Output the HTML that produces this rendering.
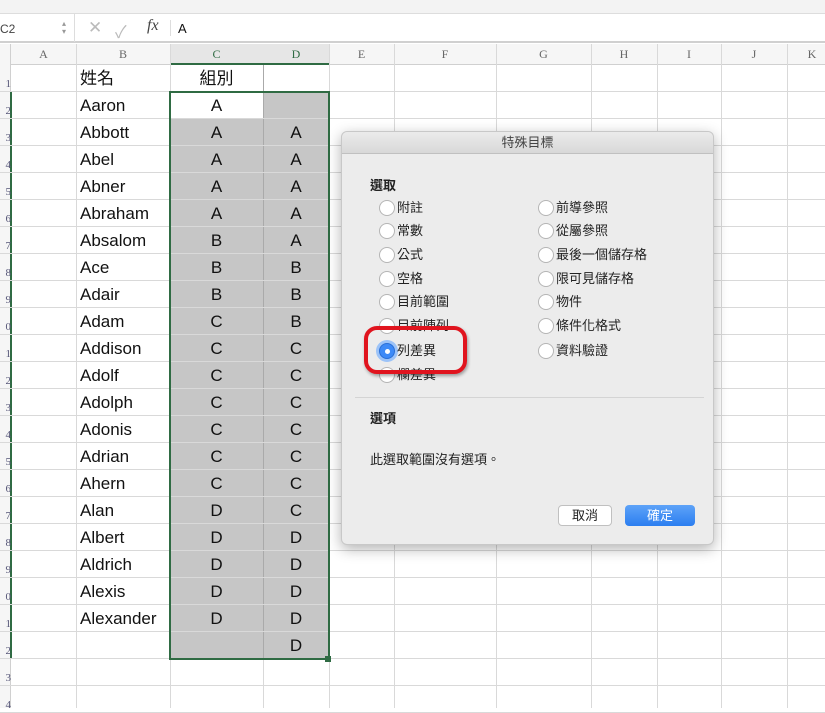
<!DOCTYPE html>
<html><head><meta charset="utf-8"><style>
*{margin:0;padding:0;box-sizing:border-box}
body{width:825px;height:708px;overflow:hidden;background:#fff;font-family:"Liberation Sans","Noto Sans CJK TC",sans-serif;position:relative}
.a{position:absolute}
.hl{position:absolute;left:0;width:825px;height:1px;background:#d9d9d9}
.vl{position:absolute;top:44px;height:664px;width:1px;background:#d9d9d9}
.ch{position:absolute;top:44px;height:21px;text-align:center;font-family:"Liberation Serif",serif;font-size:12px;color:#666;line-height:21px}
.c{position:absolute;height:27px;line-height:27px;font-size:17px;color:#111}
.g{background:#c6c6c6}
.rn{position:absolute;left:0;width:11px;font-size:11px;color:#557;font-family:"Liberation Serif",serif;overflow:hidden;text-align:right}
.r{position:absolute;width:16px;height:16px;border-radius:50%;border:1px solid #b5b5b5;background:#fff}
.t{position:absolute;font-size:13px;color:#222;line-height:16px}
</style></head><body>
<div class="a" style="left:0;top:0;width:825px;height:14px;background:#f3f3f3;border-bottom:1px solid #ddd"></div>
<div class="a" style="left:0;top:14px;width:825px;height:29px;background:#fff;border-bottom:2px solid #d0d0d0"></div>
<div class="a" style="left:0;top:14px;width:75px;height:28px;border-right:1px solid #ddd;font-size:12px;line-height:30px;color:#444">C2</div>
<div class="a" style="left:62px;top:20px;font-size:8px;color:#999;line-height:8px">▴<br>▾</div>
<div class="a" style="left:88px;top:18px;font-size:17px;color:#bbb">✕</div>
<div class="a" style="left:115px;top:18px;font-size:17px;color:#bbb">✓</div>
<div class="a" style="left:147px;top:17px;font-size:16px;font-style:italic;font-family:'Liberation Serif',serif;color:#444">fx</div>
<div class="a" style="left:170px;top:20px;width:1px;height:16px;background:#ddd"></div>
<div class="a" style="left:178px;top:21px;font-size:13px;color:#111">A</div>
<div class="a" style="left:0;top:44px;width:825px;height:21px;background:#f6f6f6;border-bottom:1px solid #d0d0d0"></div>
<div class="a" style="left:170px;top:44px;width:159px;height:21px;background:#e6e6e6;border-bottom:2px solid #2f6b43"></div>
<div class="a" style="left:0;top:44px;width:11px;height:664px;background:#f6f6f6;border-right:1px solid #d0d0d0"></div>
<div class="a" style="left:10px;top:92px;width:2px;height:567px;background:#2f6b43"></div>
<div class="ch" style="left:11px;width:65px">A</div><div class="ch" style="left:76px;width:94px">B</div><div class="ch" style="left:170px;width:93px;color:#2f6b43">C</div><div class="ch" style="left:263px;width:66px;color:#2f6b43">D</div><div class="ch" style="left:329px;width:65px">E</div><div class="ch" style="left:394px;width:102px">F</div><div class="ch" style="left:496px;width:95px">G</div><div class="ch" style="left:591px;width:66px">H</div><div class="ch" style="left:657px;width:64px">I</div><div class="ch" style="left:721px;width:66px">J</div><div class="ch" style="left:787px;width:50px">K</div>
<div class="a g" style="left:263px;top:92px;width:66px;height:27px"></div>
<div class="a g" style="left:170px;top:119px;width:159px;height:540px"></div>
<div class="vl" style="left:76px"></div><div class="vl" style="left:170px"></div><div class="vl" style="left:263px;background:#aaa;top:65px;height:594px"></div><div class="vl" style="left:263px;top:659px;height:49px"></div><div class="vl" style="left:329px"></div><div class="vl" style="left:394px"></div><div class="vl" style="left:496px"></div><div class="vl" style="left:591px"></div><div class="vl" style="left:657px"></div><div class="vl" style="left:721px"></div><div class="vl" style="left:787px"></div>
<div id="rows"></div>
<script>
var names=["Aaron","Abbott","Abel","Abner","Abraham","Absalom","Ace","Adair","Adam","Addison","Adolf","Adolph","Adonis","Adrian","Ahern","Alan","Albert","Aldrich","Alexis","Alexander"];
var C="AAAAABBBCCCCCCCDDDDD",D="AAAAABBBCCCCCCCDDDDD";
var h='';
for(var i=1;i<=24;i++){var y=65+(i-1)*27;h+='<div class="hl" style="top:'+(y+26)+'px"></div><div class="rn" style="top:'+(y+13)+'px">'+(i%10==0?'0':i%10)+'</div>';}
h+='<div class="c" style="left:80px;top:65px">姓名</div><div class="c" style="left:170px;width:93px;text-align:center;top:65px">組別</div>';
for(var i=0;i<20;i++){var y=92+i*27;h+='<div class="c" style="left:80px;top:'+y+'px">'+names[i]+'</div><div class="c" style="left:170px;width:93px;text-align:center;top:'+y+'px">'+C[i]+'</div><div class="c" style="left:263px;width:66px;text-align:center;top:'+(y+27)+'px">'+D[i]+'</div>';}
document.getElementById('rows').innerHTML=h;
</script>
<div class="a" style="left:169px;top:91px;width:161px;height:569px;border:2px solid #2f6b43"></div>
<div class="a" style="left:325px;top:656px;width:6px;height:6px;background:#2f6b43"></div>
<div class="a" style="left:341px;top:131px;width:373px;height:414px;background:#ececec;border:1px solid #c8c8c8;border-radius:6px;box-shadow:0 4px 14px rgba(0,0,0,.3)">
<div class="a" style="left:0;top:0;width:371px;height:22px;background:linear-gradient(#ebebeb,#d8d8d8);border-bottom:1px solid #c0c0c0;border-radius:6px 6px 0 0;text-align:center;font-size:13px;line-height:22px;color:#444">特殊目標</div>
<div class="t" style="left:28px;top:46px;font-weight:bold">選取</div>
<div class="r" style="left:37px;top:68px"></div><div class="t" style="left:55px;top:68px">附註</div>
<div class="r" style="left:37px;top:91px"></div><div class="t" style="left:55px;top:91px">常數</div>
<div class="r" style="left:37px;top:115px"></div><div class="t" style="left:55px;top:115px">公式</div>
<div class="r" style="left:37px;top:139px"></div><div class="t" style="left:55px;top:139px">空格</div>
<div class="r" style="left:37px;top:162px"></div><div class="t" style="left:55px;top:162px">目前範圍</div>
<div class="r" style="left:37px;top:186px"></div><div class="t" style="left:55px;top:186px">目前陣列</div>
<div class="r" style="left:37px;top:211px;background:#3d8af7;border-color:#2a6fd6;box-shadow:0 0 0 3px #9cc3f8"><div class="a" style="left:5px;top:5px;width:5px;height:5px;background:#fff;border-radius:50%"></div></div><div class="t" style="left:55px;top:211px">列差異</div>
<div class="r" style="left:37px;top:235px"></div><div class="t" style="left:55px;top:235px">欄差異</div>
<div class="r" style="left:196px;top:68px"></div><div class="t" style="left:214px;top:68px">前導參照</div>
<div class="r" style="left:196px;top:91px"></div><div class="t" style="left:214px;top:91px">從屬參照</div>
<div class="r" style="left:196px;top:115px"></div><div class="t" style="left:214px;top:115px">最後一個儲存格</div>
<div class="r" style="left:196px;top:139px"></div><div class="t" style="left:214px;top:139px">限可見儲存格</div>
<div class="r" style="left:196px;top:162px"></div><div class="t" style="left:214px;top:162px">物件</div>
<div class="r" style="left:196px;top:186px"></div><div class="t" style="left:214px;top:186px">條件化格式</div>
<div class="r" style="left:196px;top:211px"></div><div class="t" style="left:214px;top:211px">資料驗證</div>
<div class="a" style="left:22px;top:194px;width:103px;height:48px;border:4px solid #e0141e;border-radius:13px;box-shadow:1px 2px 3px rgba(0,0,0,.35)"></div>
<div class="a" style="left:13px;top:265px;width:349px;height:1px;background:#d4d4d4"></div>
<div class="t" style="left:28px;top:279px;font-weight:bold">選項</div>
<div class="t" style="left:28px;top:320px">此選取範圍沒有選項。</div>
<div class="a" style="left:216px;top:373px;width:54px;height:21px;background:#fff;border:1px solid #c0c0c0;border-radius:4px;font-size:13px;text-align:center;line-height:19px;color:#222">取消</div>
<div class="a" style="left:283px;top:373px;width:70px;height:21px;background:linear-gradient(#5ea3f8,#2b7ef0);border-radius:4px;font-size:13px;text-align:center;line-height:21px;color:#fff">確定</div>
</div>
</body></html>
